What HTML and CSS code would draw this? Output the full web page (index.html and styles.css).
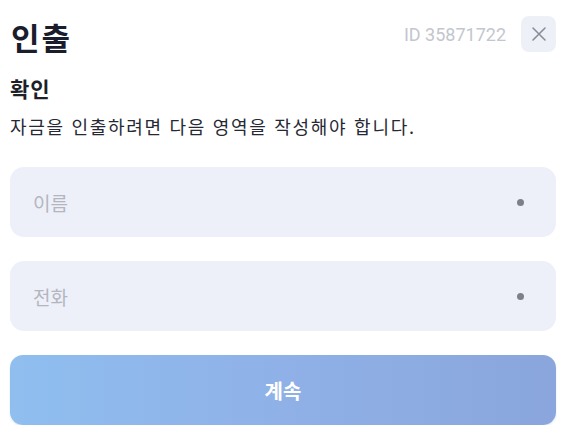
FILE: index.html
```html
<!DOCTYPE html>
<html lang="ko">
<head>
<meta charset="utf-8">
<link rel="stylesheet" href="styles.css">
</head>
<body>
<div class="modal">
  <div class="header">
    <h1 class="title">인출</h1>
    <div class="header-right">
      <span class="order-id">ID 35871722</span>
      <button class="close" type="button" aria-label="닫기">
        <svg width="16" height="16" viewBox="0 0 16 16"><path d="M2 2 L14 14 M14 2 L2 14" stroke="#8a8d98" stroke-width="1.6" stroke-linecap="round" fill="none"/></svg>
      </button>
    </div>
  </div>
  <h2 class="subtitle">확인</h2>
  <p class="desc">자금을 인출하려면 다음 영역을 작성해야 합니다.</p>
  <div class="fields">
    <label class="field"><span class="placeholder">이름</span><span class="dot"></span></label>
    <label class="field"><span class="placeholder">전화</span><span class="dot"></span></label>
    <button class="submit" type="button">계속</button>
  </div>
</div>
</body>
</html>
```

FILE: styles.css
```css
html, body {
  margin: 0;
  padding: 0;
  background: #ffffff;
}
body {
  font-family: "Noto Sans CJK KR", "Noto Sans", sans-serif;
  color: #1c1f2b;
}
.modal {
  padding: 16px 16px 0 10px;
  display: flex;
  flex-direction: column;
}
.header {
  display: flex;
  align-items: center;
  justify-content: space-between;
  height: 36px;
}
.title {
  margin: 0;
  font-size: 31px;
  font-weight: 700;
  letter-spacing: 2px;
  line-height: 36px;
  color: #1a1d2c;
  position: relative;
  top: 3px;
  left: 1px;
}
.header-right {
  display: flex;
  align-items: center;
  gap: 15px;
}
.order-id {
  font-family: Roboto, "Noto Sans CJK KR", sans-serif;
  font-size: 18px;
  color: #c3c6ce;
}
.close {
  width: 35px;
  height: 36px;
  border: 0;
  border-radius: 8px;
  background: #eef0f8;
  display: flex;
  align-items: center;
  justify-content: center;
  padding: 0;
}
.subtitle {
  margin: 22px 0 0;
  font-size: 21px;
  font-weight: 700;
  letter-spacing: 1px;
  line-height: 28px;
  color: #1d1f29;
}
.desc {
  margin: 12px 0 0;
  font-size: 18px;
  letter-spacing: 1.7px;
  line-height: 24px;
  color: #262833;
}
.fields {
  margin-top: 29px;
  display: flex;
  flex-direction: column;
  gap: 24px;
}
.field {
  height: 70px;
  border-radius: 14px;
  background: #edf0f9;
  display: flex;
  align-items: center;
  justify-content: space-between;
  padding: 0 32px 0 23px;
}
.placeholder {
  font-size: 19px;
  color: #b3b6bf;
}
.dot {
  width: 7px;
  height: 7px;
  border-radius: 50%;
  background: #7d808b;
}
.submit {
  height: 70px;
  border: 0;
  border-radius: 13px;
  background: linear-gradient(90deg, #8fbeef 0%, #8fb2e8 45%, #8aa6dc 100%);
  color: #ffffff;
  font-family: "Noto Sans CJK KR", sans-serif;
  font-size: 20px;
  font-weight: 700;
  box-shadow: 0 1px 2px rgba(120, 150, 200, 0.25);
}
```
